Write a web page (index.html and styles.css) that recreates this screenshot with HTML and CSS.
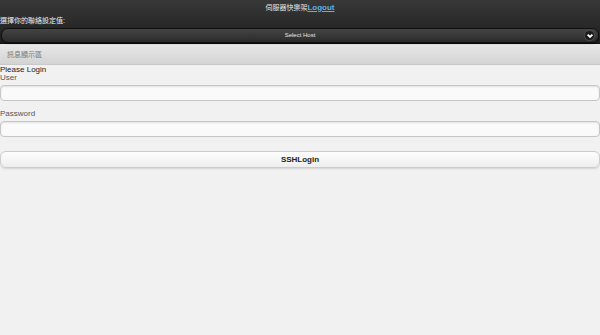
FILE: index.html
```html
<!DOCTYPE html>
<html lang="zh-Hant">

<head>
    <meta charset="UTF-8">
    <meta name="viewport" content="width=device-width, initial-scale=1.0">
    <title>SSH Login</title>
    <link rel="stylesheet" href="styles.css">
</head>

<body>
    <div class="header">
        <div class="title">伺服器快樂架<a href="#">Logout</a></div>
        <div class="label">選擇你的聯絡設定值:</div>
        <div class="select">
            <span>Select Host</span>
            <span class="arrow">
                <svg width="8" height="8" viewBox="0 0 8 8">
                    <path d="M1.6 2.6 L4 5 L6.4 2.6" fill="none" stroke="#fff" stroke-width="1.8" />
                </svg>
            </span>
        </div>
    </div>

    <div class="msgbar">訊息顯示區</div>

    <div class="content">
        <div class="please">Please Login</div>
        <label class="field-label">User</label>
        <div class="input"></div>
        <label class="field-label pw">Password</label>
        <div class="input"></div>
        <div class="button">SSHLogin</div>
    </div>
</body>

</html>
```

FILE: styles.css
```css
html,
body {
    margin: 0;
    height: 100%;
}

body {
    background: #f1f1f1;
    font-family: "Liberation Sans", Arial, "Noto Sans CJK TC", sans-serif;
    font-size: 8px;
    color: #333;
}

.header {
    background: linear-gradient(#383838, #1e1e1e);
    border-bottom: 1px solid #111;
    color: #fff;
    height: 43px;
}

.title {
    text-align: center;
    font-size: 7px;
    height: 15px;
    line-height: 16px;
    color: #e6e6e6;
}

.title a {
    color: #5fb0e0;
    font-size: 8px;
    font-weight: bold;
}

.label {
    font-size: 7px;
    line-height: 12px;
    height: 12px;
    color: #eee;
}

.select {
    position: relative;
    height: 13px;
    line-height: 13px;
    margin: 1px 1px 0;
    border: 1px solid #111;
    border-radius: 7px;
    background: linear-gradient(#444, #2b2b2b);
    text-align: center;
    font-size: 6px;
    color: #e6e6e6;
    box-shadow: 0 1px 1px rgba(0, 0, 0, 0.4);
}

.arrow {
    position: absolute;
    right: 4px;
    top: 2px;
    width: 9px;
    height: 9px;
    border-radius: 50%;
    background: #1a1a1a;
    box-shadow: 0 0 0 1px #4a4a4a;
    display: flex;
    align-items: center;
    justify-content: center;
}

.msgbar {
    height: 20px;
    line-height: 21px;
    padding-left: 7px;
    background: linear-gradient(#e9e9e9, #d3d3d3);
    border-bottom: 1px solid #c8c8c8;
    color: #777;
    font-size: 7px;
}

.please {
    font-size: 8px;
    line-height: 9px;
    color: #222;
}

.field-label {
    display: block;
    font-size: 8px;
    line-height: 8px;
    color: #555;
}

.pw {
    margin-top: 9px;
}

.input {
    margin-top: 3px;
    height: 14px;
    border: 1px solid #c6c6c6;
    border-radius: 4px;
    background: #fafafa;
    box-shadow: inset 0 1px 2px rgba(0, 0, 0, 0.1);
}

.button {
    margin-top: 14px;
    height: 15px;
    line-height: 15px;
    border: 1px solid #ccc;
    border-radius: 6px;
    background: linear-gradient(#fdfdfd, #eee);
    box-shadow: 0 1px 2px rgba(0, 0, 0, 0.12);
    text-align: center;
    font-weight: bold;
    font-size: 8px;
    color: #222;
}
```
